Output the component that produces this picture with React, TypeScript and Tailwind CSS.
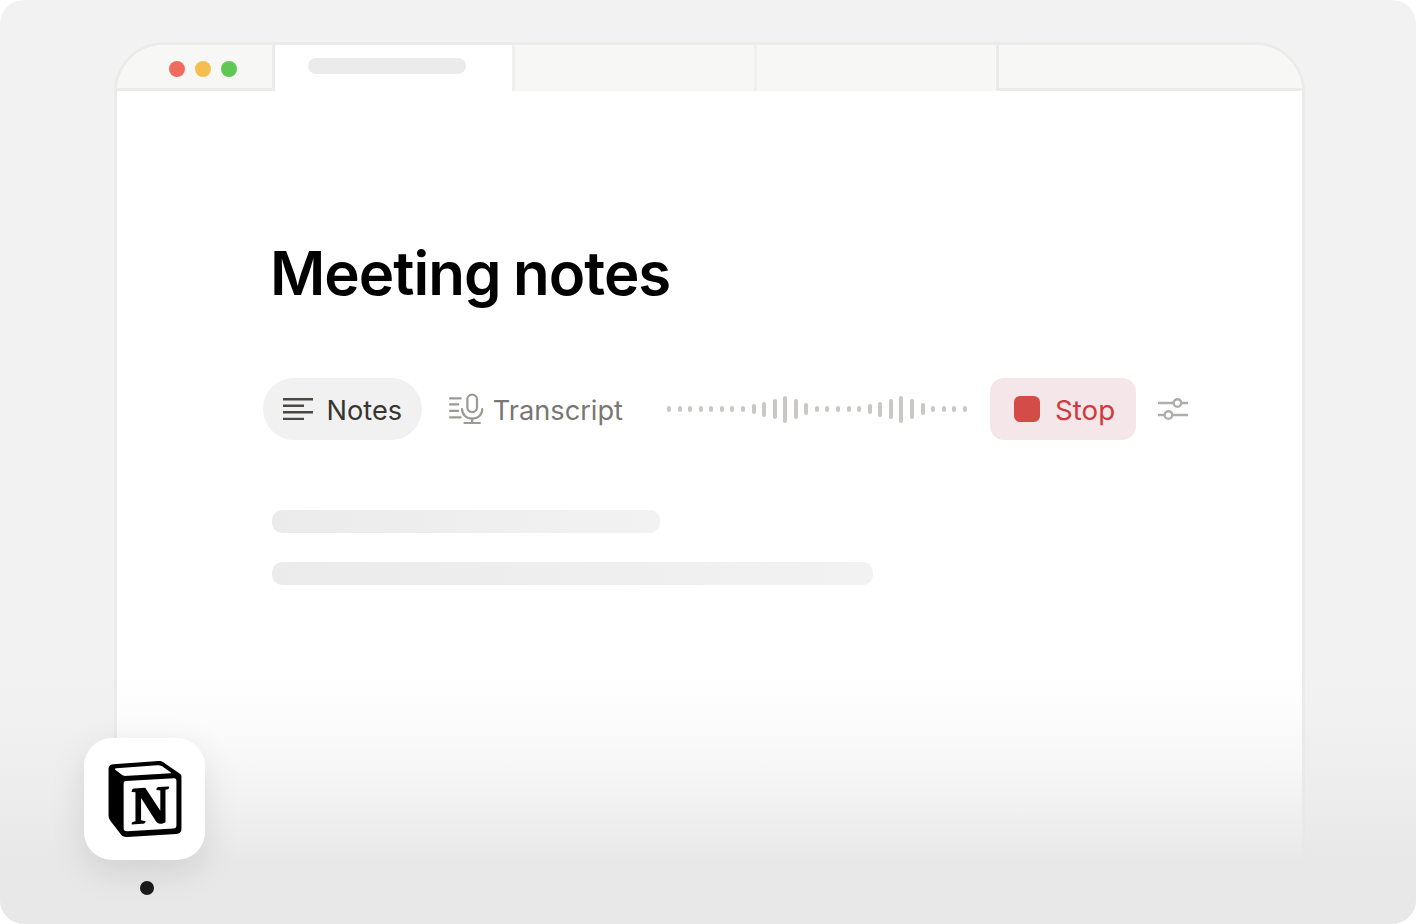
import React from "react";
import { SiNotion } from "react-icons/si";

const bars = [
  "h-[6px]", "h-[6px]", "h-[6px]", "h-[6px]", "h-[6px]", "h-[6px]", "h-[6px]", "h-[6px]",
  "h-[10px]", "h-[15px]", "h-[20px]", "h-[27px]", "h-[20px]", "h-[12px]",
  "h-[6px]", "h-[6px]", "h-[6px]", "h-[6px]", "h-[6px]",
  "h-[10px]", "h-[15px]", "h-[20px]", "h-[27px]", "h-[20px]", "h-[12px]",
  "h-[6px]", "h-[6px]", "h-[6px]", "h-[6px]",
];

const NotesIcon = () => (
  <svg width="30" height="22" viewBox="0 0 30 22" fill="none" stroke="#4a4843" strokeWidth="2.4">
    <path d="M0 1.300h30M0 7.700h21M0 14.300h30M0 21h21" />
  </svg>
);

const MicIcon = () => (
  <svg width="36" height="32" viewBox="0 0 36 32" fill="none" stroke="#9b9a97" strokeWidth="2.3" strokeLinecap="round">
    <path d="M1 5h11M1 11.300h8.500M1 18h8.500M1 24.600h11" />
    <rect x="19" y="1.200" width="10" height="18" rx="5" />
    <path d="M13.500 16c0 6 4.500 10 10.500 10s10.500-4 10.500-10" />
    <path d="M24 26v4.500M16 30.500h16" />
  </svg>
);

const SlidersIcon = () => (
  <svg width="30" height="24" viewBox="0 0 30 24" fill="none" stroke="#aeaeac" strokeWidth="2.400">
    <path d="M0 6h15.500M23.500 6h6.500M0 18h6.500M14.500 18h15.500" />
    <circle cx="19.500" cy="6" r="3.800" />
    <circle cx="10.500" cy="18" r="3.800" />
  </svg>
);

export default function App() {
  return (
    <div className="relative w-[1416px] h-[924px] overflow-hidden bg-white font-[Inter,sans-serif]">
      <div className="w-full h-full rounded-[24px] bg-[#f2f2f2] pt-[42px] pl-[114px] overflow-hidden relative">
        <div className="w-[1191px] h-[882px] bg-white border-[3px] border-b-0 border-[#ebebeb] rounded-t-[50px] overflow-hidden">
          {/* tab strip */}
          <div className="flex h-[46px]">
            <div className="w-[158px] bg-[#f7f7f5] border-r-[3px] border-b-[3px] border-[#ebebeb] flex items-center gap-[10px] pl-[52px] pt-[4px]">
              <span className="w-4 h-4 rounded-full bg-[#ef6b5e]" />
              <span className="w-4 h-4 rounded-full bg-[#f4bf4f]" />
              <span className="w-4 h-4 rounded-full bg-[#5fc854]" />
            </div>
            <div className="w-[237px] bg-white pl-[33px] pt-[13px]">
              <div className="w-[158px] h-4 rounded-full bg-[#ebebeb]" />
            </div>
            <div className="w-[242px] bg-[#f7f7f5] border-l-[3px] border-[#f0f0ee]" />
            <div className="w-[242px] bg-[#f7f7f5] border-l-[3px] border-[#f0f0ee]" />
            <div className="flex-1 bg-[#f7f7f5] border-l-[3px] border-b-[3px] border-[#ebebeb]" />
          </div>

          <div className="pl-[146px]">
            <h1 className="mt-[144px] pl-[7px] text-[60px] leading-[76px] font-semibold tracking-[-1px] [word-spacing:-1.5px] text-black">
              Meeting notes
            </h1>

            {/* toolbar */}
            <div className="flex items-center mt-[67px] h-[62px]">
              <div className="flex items-center h-[62px] w-[159px] rounded-full bg-[#f1f1f1] pl-[20px] gap-[13.500px]">
                <NotesIcon />
                <span className="pt-[4px] text-[27.200px] text-[#37352f]">Notes</span>
              </div>
              <div className="flex items-center w-[174px] ml-[27px] gap-[9px]">
                <MicIcon />
                <span className="pt-[4px] text-[27.200px] text-[#787774]">Transcript</span>
              </div>
              <div className="flex items-center justify-between w-[300px] ml-[44px]">
                {bars.map((h, i) => (
                  <span key={i} className={`w-[4px] rounded-full bg-[#c9c8c5] ${h}`} />
                ))}
              </div>
              <div className="flex items-center h-[62px] w-[146px] ml-[23px] rounded-[14px] bg-[#f5e6e9] pl-[24px] gap-[15px]">
                <span className="w-[26px] h-[26px] rounded-[6px] bg-[#d44c47]" />
                <span className="pt-[4px] text-[27.700px] text-[#d1393a]">Stop</span>
              </div>
              <div className="ml-[22px]">
                <SlidersIcon />
              </div>
            </div>

            {/* placeholder lines */}
            <div className="pl-[9px] mt-[70px] flex flex-col gap-[29px]">
              <div className="w-[388px] h-[23px] rounded-[10px] bg-gradient-to-r from-[#ebebeb] to-[#f2f2f2]" />
              <div className="w-[601px] h-[23px] rounded-[10px] bg-gradient-to-r from-[#ebebeb] to-[#f2f2f2]" />
            </div>
          </div>
        </div>

        {/* fade at the bottom */}
        <div className="absolute left-0 right-0 top-[672px] h-[190px] bg-[linear-gradient(to_bottom,#e8e8e800_0%,#e8e8e826_25%,#e8e8e85c_50%,#e8e8e8a8_75%,#e8e8e8_100%)]" />
        <div className="absolute left-0 right-0 top-[862px] bottom-0 bg-[#e8e8e8]" />

        {/* dock */}
        <div className="absolute left-[84px] top-[738px] w-[121px] h-[122px] rounded-[28px] bg-white shadow-[0_12px_36px_rgba(0,0,0,0.1)] flex items-center justify-center pl-[1px]">
          <SiNotion size={76} color="#000" />
        </div>
        <div className="absolute left-[140px] top-[881px] w-[14px] h-[14px] rounded-full bg-[#1a1a1a]" />
      </div>
    </div>
  );
}
